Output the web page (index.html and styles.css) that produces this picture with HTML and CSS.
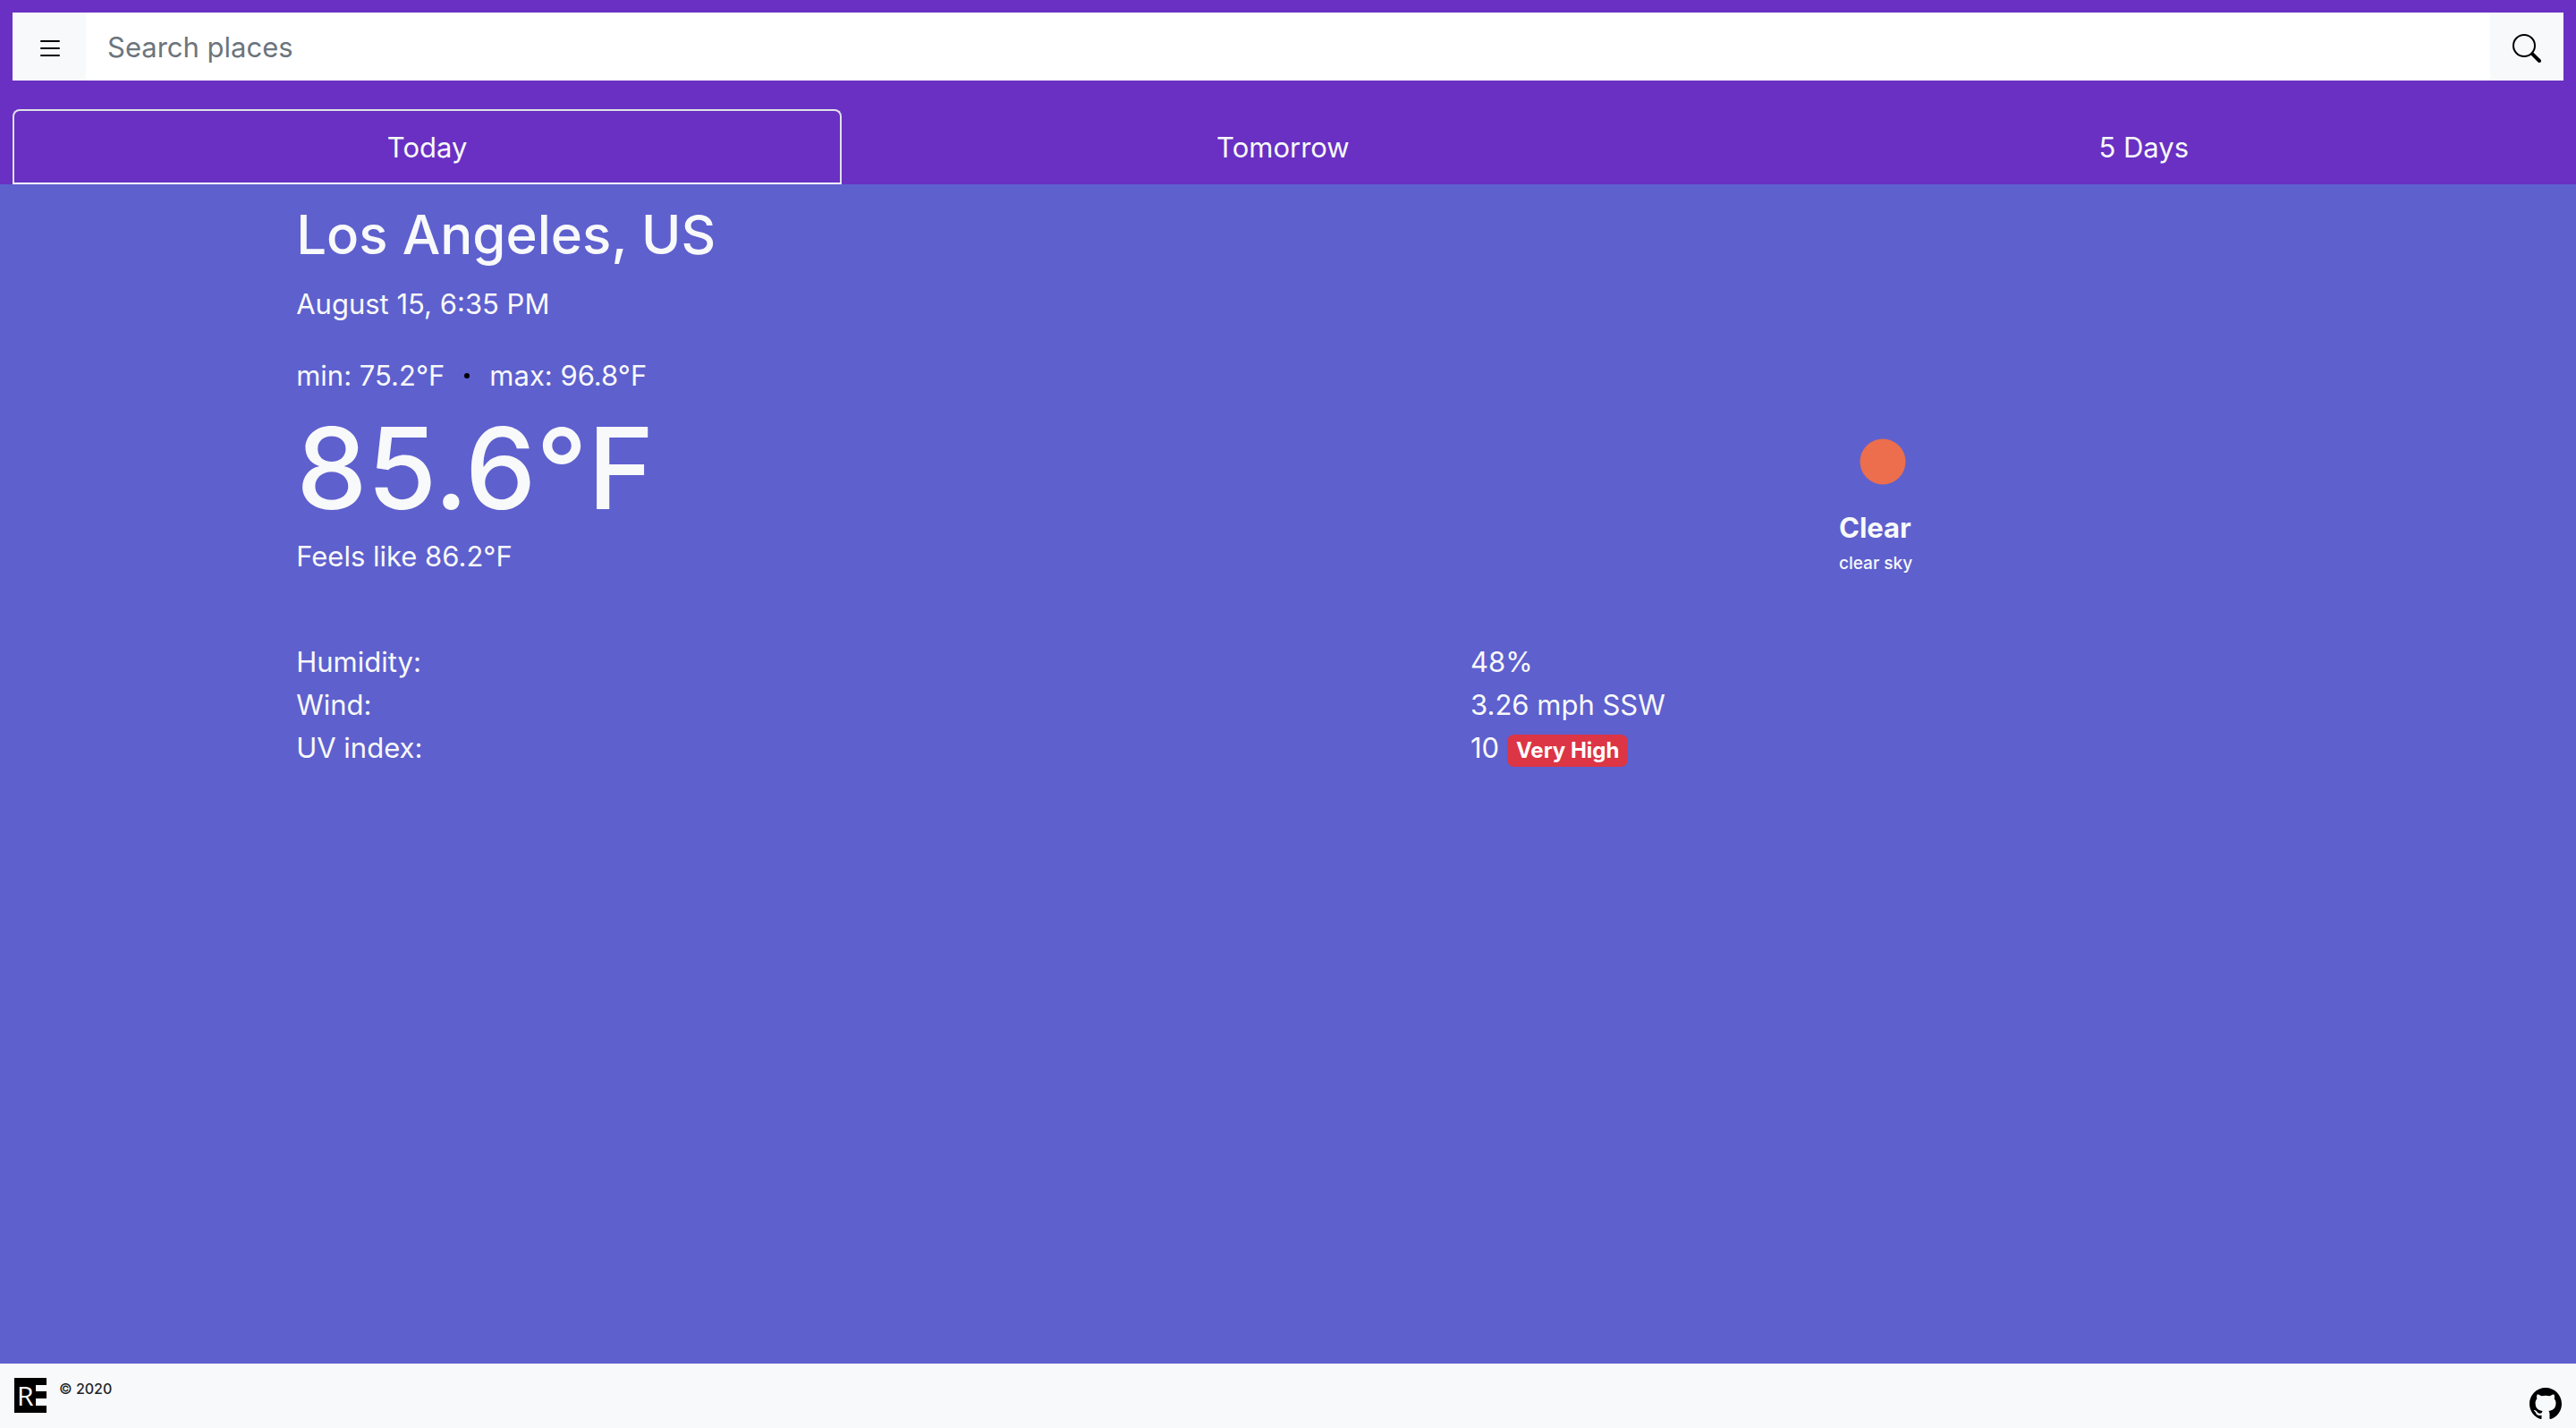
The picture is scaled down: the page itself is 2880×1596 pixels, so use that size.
FILE: index.html
```html
<!DOCTYPE html>
<html lang="en">
<head>
  <meta charset="utf-8">
  <meta name="viewport" content="width=device-width, initial-scale=1">
  <title>Weather in Los Angeles, US</title>
  <link rel="stylesheet" href="styles.css">
</head>
<body>
  <header class="header">
    <form class="search" role="search">
      <button class="search-button" type="button" aria-label="Menu">
        <svg class="icon" viewBox="0 0 16 16" fill="none" stroke="currentColor" stroke-linecap="round" aria-hidden="true">
          <path d="M3.5 4h10M3.5 8h10M3.5 12h10"/>
        </svg>
      </button>
      <input class="search-input" type="text" placeholder="Search places" aria-label="Search places">
      <button class="search-button" type="submit" aria-label="Search">
        <svg class="icon" viewBox="0 0 16 16" fill="currentColor" fill-rule="evenodd" aria-hidden="true">
          <path d="M10.442 10.442a1 1 0 0 1 1.415 0l3.85 3.85a1 1 0 0 1-1.414 1.415l-3.85-3.85a1 1 0 0 1 0-1.415z"/>
          <path d="M6.5 12a5.5 5.5 0 1 0 0-11 5.5 5.5 0 0 0 0 11zM13 6.5a6.5 6.5 0 1 1-13 0 6.5 6.5 0 0 1 13 0z"/>
        </svg>
      </button>
    </form>
    <nav class="tabs">
      <a class="tab tab-active" href="#today" aria-current="page">Today</a>
      <a class="tab" href="#tomorrow">Tomorrow</a>
      <a class="tab" href="#days">5 Days</a>
    </nav>
  </header>

  <main class="weather">
    <h1 class="city">Los Angeles, US</h1>
    <p class="date">August 15, 6:35 PM</p>
    <section class="summary">
      <div>
        <p class="range"><span>min: 75.2°F</span><span class="dot"></span><span>max: 96.8°F</span></p>
        <p class="temperature">85.6°F</p>
        <p>Feels like 86.2°F</p>
      </div>
      <div>
        <svg class="sky" viewBox="0 0 100 100" aria-hidden="true"><circle cx="49" cy="50" r="25.5" fill="#ec6e4c"/></svg>
        <p class="condition">Clear</p>
        <p class="description">clear sky</p>
      </div>
    </section>
    <table class="details">
      <tbody>
        <tr><th scope="row">Humidity:</th><td>48%</td></tr>
        <tr><th scope="row">Wind:</th><td>3.26 mph SSW</td></tr>
        <tr><th scope="row">UV index:</th><td>10 <span class="badge">Very High</span></td></tr>
      </tbody>
    </table>
  </main>

  <footer class="footer">
    <a class="logo" href="#home" aria-label="Home">
      <svg viewBox="0 0 36 39" width="36" height="39" aria-hidden="true">
        <path d="M0 0h36v39H0z"/>
        <path d="M24 8h12v7H24zM24 23h12v8H24z" fill="#f8f9fa"/>
        <text class="logo-letter" x="3" y="31">R</text>
      </svg>
    </a>
    <p class="copyright">© 2020</p>
    <a class="github" href="#github" aria-label="GitHub">
      <svg viewBox="0 0 16 16" width="36" height="36" aria-hidden="true">
        <path d="M8 0C3.58 0 0 3.58 0 8c0 3.54 2.29 6.53 5.47 7.59.4.07.55-.17.55-.38 0-.19-.01-.82-.01-1.49-2.01.37-2.53-.49-2.69-.94-.09-.23-.48-.94-.82-1.13-.28-.15-.68-.52-.01-.53.63-.01 1.08.58 1.23.82.72 1.21 1.87.87 2.33.66.07-.52.28-.87.51-1.07-1.78-.2-3.64-.89-3.64-3.95 0-.87.31-1.59.82-2.15-.08-.2-.36-1.02.08-2.12 0 0 .67-.21 2.2.82.64-.18 1.32-.27 2-.27s1.36.09 2 .27c1.53-1.04 2.2-.82 2.2-.82.44 1.1.16 1.92.08 2.12.51.56.82 1.27.82 2.15 0 3.07-1.87 3.75-3.65 3.95.29.25.54.73.54 1.48 0 1.07-.01 1.93-.01 2.2 0 .21.15.46.55.38A8.01 8.01 0 0 0 16 8c0-4.42-3.58-8-8-8z"/>
      </svg>
    </a>
  </footer>
</body>
</html>
```

FILE: styles.css
```css
* {
  box-sizing: border-box;
  margin: 0;
}

body {
  display: flex;
  flex-direction: column;
  min-height: 100vh;
  background: #5e60ce;
  color: #f8f9fa;
  font: 31px/48px Inter, sans-serif;
}

.header {
  padding: 14px 14px 0;
  background: #6930c3;
}

.search {
  display: flex;
  margin-bottom: 32px;
}

.search-button {
  display: flex;
  align-items: center;
  justify-content: center;
  width: 82px;
  padding: 8px 0 4px;
  border: 0;
  background: #f8f9fa;
  color: #000;
}

.icon {
  width: 32px;
  height: 32px;
}

.search-input {
  flex: 1;
  min-width: 0;
  height: 76px;
  padding: 0 24px;
  border: 0;
  background: #fff;
  color: #495057;
  font: inherit;
}

.search-input::placeholder {
  color: #6c757d;
  opacity: 1;
}

.tabs {
  display: flex;
}

.tab {
  flex: 1 1 auto;
  padding: 17px 32px 15px;
  border: 2px solid transparent;
  border-radius: 8px 8px 0 0;
  color: #f8f9fa;
  text-align: center;
  text-decoration: none;
}

.tab-active {
  border-color: #dee2e6 #dee2e6 #fff;
}

.weather {
  flex: 1;
  padding: 18px 11.5% 0;
}

.city {
  margin-bottom: 16px;
  font-size: 60px;
  font-weight: 500;
  line-height: 76px;
}

.date {
  margin-bottom: 32px;
}

.summary {
  display: grid;
  grid-template-columns: 7fr 2fr;
  align-items: end;
  margin-bottom: 70px;
}

.range {
  display: flex;
  align-items: center;
  gap: 22px;
}

.dot {
  width: 6px;
  height: 6px;
  border-radius: 50%;
  background: #000;
}

.temperature {
  padding-top: 4px;
  font-size: 126px;
  font-weight: 500;
  line-height: 150px;
}

.sky {
  display: block;
  width: 100px;
  height: 100px;
}

.condition {
  font-weight: 700;
}

.description {
  font-size: 19px;
  font-weight: 500;
  line-height: 32px;
}

.details {
  width: 100%;
  border-collapse: collapse;
  table-layout: fixed;
}

.details th,
.details td {
  padding: 0;
  font-weight: 400;
  text-align: left;
}

.details th {
  width: 59.2%;
}

.badge {
  display: inline-block;
  padding: 5px 10px;
  border-radius: 8px;
  background: #dc3545;
  color: #fff;
  font-size: 24px;
  font-weight: 700;
  line-height: 26px;
}

.footer {
  display: flex;
  align-items: flex-start;
  height: 72px;
  padding: 16px;
  background: #f8f9fa;
  color: #212529;
}

.logo svg,
.github svg {
  display: block;
}

.logo-letter {
  fill: #fff;
  font: 400 30px "Open Sans", sans-serif;
}

.copyright {
  margin-left: 14px;
  font-size: 16px;
  font-weight: 500;
  line-height: 24px;
}

.github {
  margin: 11px 0 0 auto;
}
```
